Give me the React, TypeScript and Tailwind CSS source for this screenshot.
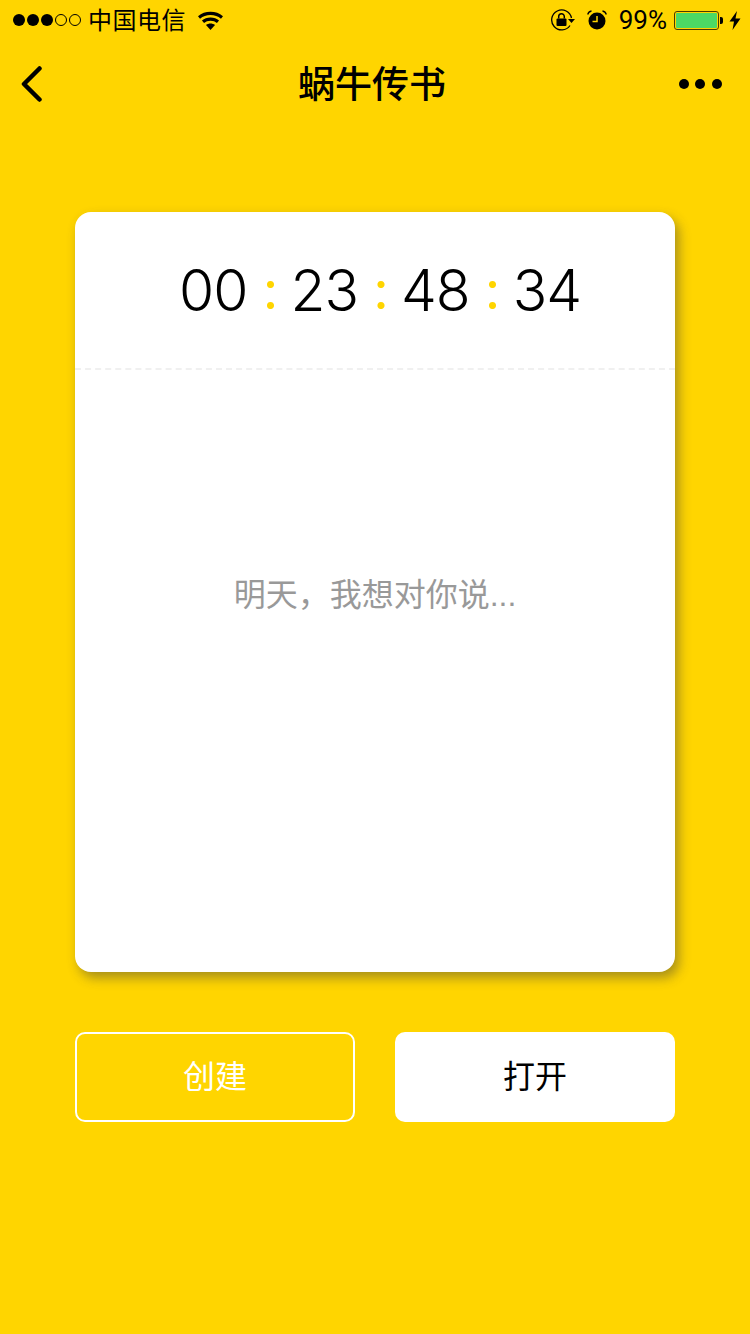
const cjk = "font-['Liberation_Sans','Noto_Sans_CJK_SC',sans-serif]"

function Dots() {
  return (
    <div className="flex items-center gap-[2px]">
      <span className="w-[12px] h-[12px] rounded-full bg-black" />
      <span className="w-[12px] h-[12px] rounded-full bg-black" />
      <span className="w-[12px] h-[12px] rounded-full bg-black" />
      <span className="w-[12px] h-[12px] rounded-full border border-black" />
      <span className="w-[12px] h-[12px] rounded-full border border-black" />
    </div>
  )
}

function Wifi() {
  return (
    <svg width="25" height="19" viewBox="0 0 25 19">
      <path d="M1 6.500C7.500 1 17.500 1 24 6.500" fill="none" stroke="#000" strokeWidth="3.200" />
      <path d="M5 10.700C9 7.300 16 7.300 20 10.700" fill="none" stroke="#000" strokeWidth="3.200" />
      <path d="M8 14C10.500 12 14.500 12 17 14L12.500 19Z" fill="#000" />
    </svg>
  )
}

function LockRotate() {
  return (
    <svg width="24" height="22" viewBox="0 0 24 22">
      <path d="M19 16.500A10 10 0 1 1 20.500 9" fill="none" stroke="#000" strokeWidth="1.300" />
      <path d="M17 10H24L20.500 14Z" fill="#000" />
      <rect x="5.500" y="9.500" width="10" height="7.500" rx="1" fill="#000" />
      <path d="M7.700 9.500V7.500A2.800 2.800 0 0 1 13.300 7.500V9.500" fill="none" stroke="#000" strokeWidth="1.500" />
    </svg>
  )
}

function Alarm() {
  return (
    <svg width="20" height="20" viewBox="0 0 20 20">
      <circle cx="10" cy="11" r="8.500" fill="#000" />
      <path d="M10 6V11.500H5.500" fill="none" stroke="#ffd500" strokeWidth="1.500" />
      <path d="M0.700 4.500C1.200 2.500 2.700 1.200 4.500 1" fill="none" stroke="#000" strokeWidth="1.300" />
      <path d="M19.300 4.500C18.800 2.500 17.300 1.200 15.500 1" fill="none" stroke="#000" strokeWidth="1.300" />
    </svg>
  )
}

function Battery() {
  return (
    <div className="flex items-center">
      <div className="w-[45px] h-[19px] border border-[#4a3c00] rounded-[3px] p-[1px]">
        <div className="w-full h-full bg-[#4cd964] rounded-[1px]" />
      </div>
      <div className="w-[3px] h-[7px] bg-black rounded-r-[2px] ml-[1px]" />
    </div>
  )
}

function Bolt() {
  return (
    <svg width="12" height="19" viewBox="0 0 12 19">
      <path d="M8 0L0.500 10.500H5L3.500 19L11.500 7.500H6.500Z" fill="#000" />
    </svg>
  )
}

function Sep() {
  return <span className="w-[43px] pl-[3px] text-center text-[#ffd500] text-[56px] font-normal leading-none relative -top-[2px] tracking-normal font-['Lato','sans-serif']">:</span>
}

export default function App() {
  return (
    <div className={`w-[750px] h-[1334px] bg-[#ffd500] flex flex-col overflow-hidden ${cjk}`}>
      <div className="h-[40px] flex items-center justify-between pl-[13px] pr-[9px] text-black">
        <div className="flex items-center">
          <Dots />
          <span className="ml-[7px] text-[24px] tracking-[0.5px] leading-none relative top-[1px]">中国电信</span>
          <span className="ml-[12px]"><Wifi /></span>
        </div>
        <div className="flex items-center">
          <LockRotate />
          <span className="ml-[12px]"><Alarm /></span>
          <span className="ml-[12px] text-[26px] leading-none font-['Roboto','sans-serif']">99%</span>
          <span className="ml-[7px]"><Battery /></span>
          <span className="ml-[6px]"><Bolt /></span>
        </div>
      </div>

      <div className="h-[88px] grid grid-cols-3 items-center pl-[22px] pr-[28px]">
        <svg className="-ml-[2px]" width="22" height="38" viewBox="0 0 22 38">
          <path d="M19.500 3.500L4 19L19.500 34.500" fill="none" stroke="#000" strokeWidth="4.500" strokeLinecap="round" strokeLinejoin="round" />
        </svg>
        <h1 className="text-[37px] leading-none font-medium text-black text-center whitespace-nowrap relative top-[1px]">蜗牛传书</h1>
        <div className="flex items-center justify-end gap-[6.500px]">
          <span className="w-[10px] h-[10px] rounded-full bg-black" />
          <span className="w-[10px] h-[10px] rounded-full bg-black" />
          <span className="w-[10px] h-[10px] rounded-full bg-black" />
        </div>
      </div>

      <div className="mt-[84px] mx-[75px] h-[760px] bg-white rounded-[16px] shadow-[4px_6px_12px_rgba(60,60,60,0.45)] flex flex-col">
        <div className="h-[158px] pl-[10px] border-b-2 border-dashed border-[#f0f0f0] flex items-center justify-center text-black text-[57px] tracking-[-1px] leading-none font-['Inter','sans-serif'] font-light">
          <span>00</span>
          <Sep />
          <span>23</span>
          <Sep />
          <span>48</span>
          <Sep />
          <span>34</span>
        </div>
        <div className="flex-1 pt-[205px] text-center text-[32px] leading-[40px] text-[#999999]">
          明天，我想对你说...
        </div>
      </div>

      <div className="mt-[60px] mx-[75px] flex gap-[40px]">
        <button className="w-[280px] h-[90px] rounded-[10px] border-2 border-white text-white text-[32px]">创建</button>
        <button className="w-[280px] h-[90px] rounded-[10px] bg-white text-black text-[32px]">打开</button>
      </div>
    </div>
  )
}
